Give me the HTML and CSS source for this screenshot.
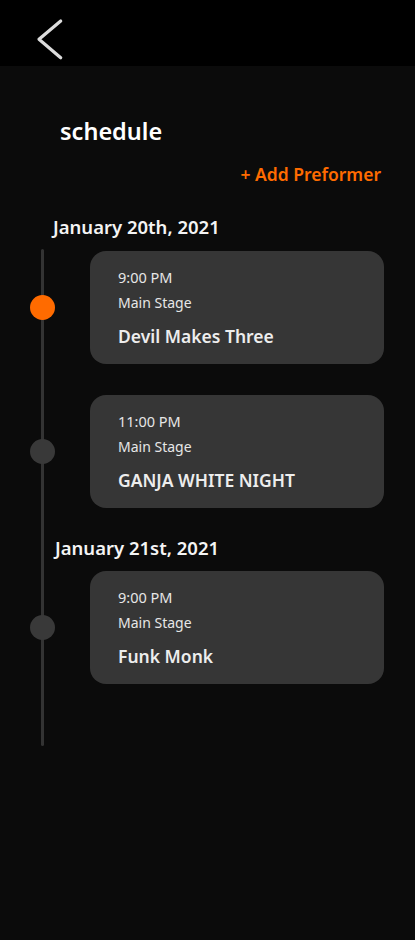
FILE: index.html
```html
<!DOCTYPE html>
<html>
<head>
<meta charset="utf-8">
<link rel="stylesheet" href="styles.css">
</head>
<body>
<header class="topbar">
  <svg class="back" width="32" height="50" viewBox="0 0 32 50">
    <polyline points="25.7,13 4,31.3 25.7,49.7" fill="none" stroke="#dcdcdc" stroke-width="3.2" stroke-linecap="round" stroke-linejoin="round"/>
  </svg>
</header>
<main class="page">
  <h1 class="title">schedule</h1>
  <div class="actions"><span class="add">+ Add Preformer</span></div>
  <h2 class="date first">January 20th, 2021</h2>
  <section class="timeline">
    <div class="row">
      <span class="dot active"></span>
      <div class="card">
        <div class="time">9:00 PM</div>
        <div class="stage">Main Stage</div>
        <div class="name">Devil Makes Three</div>
      </div>
    </div>
    <div class="row gap">
      <span class="dot"></span>
      <div class="card">
        <div class="time">11:00 PM</div>
        <div class="stage">Main Stage</div>
        <div class="name">GANJA WHITE NIGHT</div>
      </div>
    </div>
    <h2 class="date second">January 21st, 2021</h2>
    <div class="row">
      <span class="dot"></span>
      <div class="card">
        <div class="time">9:00 PM</div>
        <div class="stage">Main Stage</div>
        <div class="name">Funk Monk</div>
      </div>
    </div>
  </section>
</main>
</body>
</html>
```

FILE: styles.css
```css
* { box-sizing: border-box; margin: 0; padding: 0; }
html, body { background: #0b0b0b; }
body {
  width: 415px;
  min-height: 940px;
  font-family: "Noto Sans", "Open Sans", sans-serif;
  color: #ececec;
}
.topbar {
  height: 66px;
  background: #000;
  display: flex;
  align-items: flex-start;
  padding-left: 35px;
  padding-top: 8px;
}
.back { display: block; overflow: visible; }
.page { display: flex; flex-direction: column; }
.title {
  margin-top: 50px;
  padding-left: 60px;
  font-size: 23.5px;
  line-height: 30px;
  font-weight: 600;
  color: #fff;
}
.actions {
  margin-top: 16px;
  display: flex;
  justify-content: flex-end;
  padding-right: 34px;
}
.add {
  font-size: 17.5px;
  line-height: 24px;
  font-weight: 600;
  color: #ff6b00;
}
.date {
  font-size: 18.5px;
  line-height: 24px;
  font-weight: 600;
  color: #f4f4f4;
}
.date.first { margin-top: 29px; padding-left: 53px; }
.date.second { margin-top: 28px; margin-bottom: 11px; padding-left: 55px; }
.timeline {
  position: relative;
  margin-top: 10px;
  padding-top: 2px;
  padding-bottom: 62px;
}
.timeline::before {
  content: "";
  position: absolute;
  left: 41px;
  top: 0;
  bottom: 0;
  width: 3px;
  border-radius: 2px;
  background: #333;
}
.row {
  display: flex;
  align-items: center;
  padding-left: 30px;
  gap: 35px;
}
.row.gap { margin-top: 31px; }
.dot {
  position: relative;
  flex: none;
  width: 25px;
  height: 25px;
  border-radius: 50%;
  background: #393939;
}
.dot.active { background: #ff6b00; }
.card {
  width: 294px;
  height: 113px;
  border-radius: 16px;
  background: #363636;
  padding: 16px 20px 15px 28px;
}
.time, .stage {
  font-size: 14.5px;
  line-height: 20px;
  color: #e6e6e6;
}
.stage { font-size: 14px; margin-top: 6px; }
.name {
  margin-top: 10px;
  font-size: 17.5px;
  line-height: 26px;
  font-weight: 600;
  color: #ededed;
}
```
